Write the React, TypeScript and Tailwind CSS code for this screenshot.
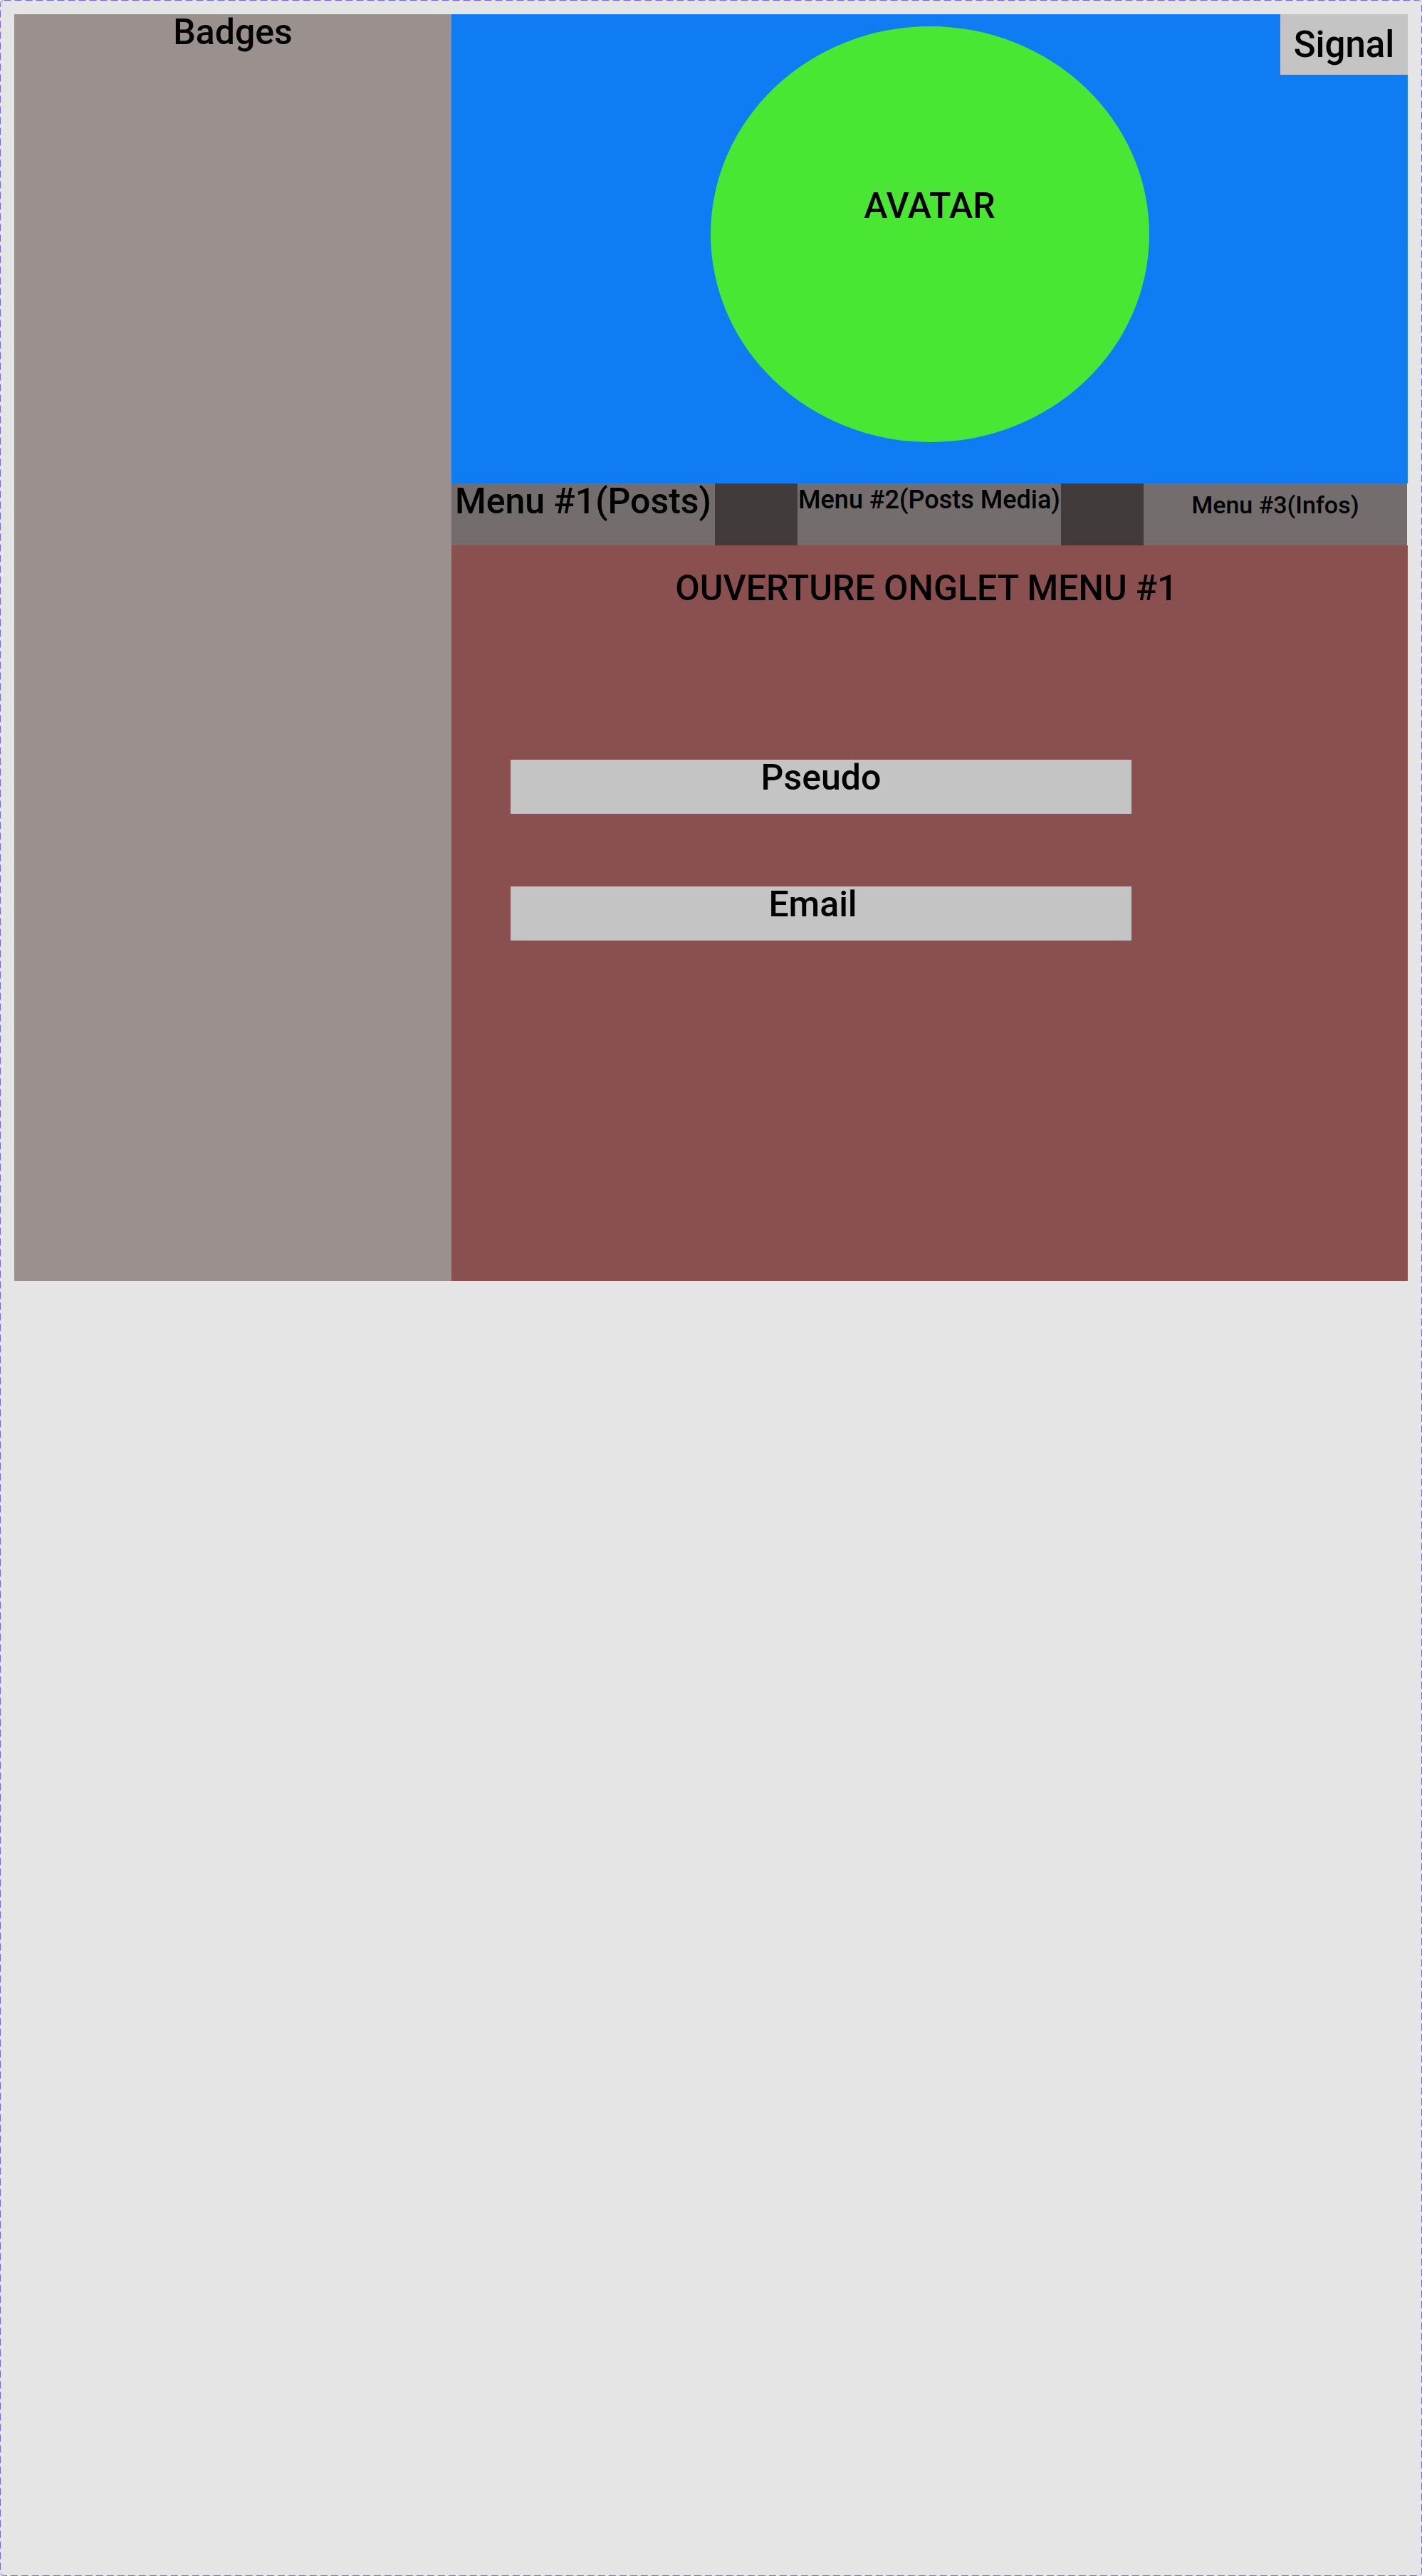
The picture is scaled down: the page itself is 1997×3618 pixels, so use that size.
import React from 'react';

// maquette profil : badges à gauche, avatar + menus + onglet ouvert à droite

const MENUS = [
  { label: 'Menu #1(Posts)', size: 'text-[50px] pt-0' },
  { label: 'Menu #2(Posts Media)', size: 'text-[36px] pt-[5px]' },
  { label: 'Menu #3(Infos)', size: 'text-[34px] pt-[13px]' },
];

function FieldBox({ label, className = '' }: { label: string; className?: string }) {
  return (
    <div className={`ml-[83px] flex h-[76px] w-[872px] justify-center bg-[#c4c4c4] ${className}`}>
      <span className="text-[50px] leading-none">{label}</span>
    </div>
  );
}

export default function App() {
  return (
    <div className="relative h-[3618px] w-[1997px] bg-[#e5e5e5] p-[20px] font-['Roboto',sans-serif] font-medium text-black">
      {/* contour pointillé du cadre */}
      <svg className="pointer-events-none absolute inset-0" width="1997" height="3618">
        <rect
          x="0.5"
          y="0.5"
          width="1996"
          height="3617"
          rx="5"
          fill="none"
          stroke="#7b61ff"
          strokeWidth="1"
          strokeDasharray="10 5"
        />
      </svg>

      <div className="flex h-[1779px]">
        {/* colonne badges */}
        <aside className="flex w-[614px] justify-center bg-[#9a908e]">
          <span className="text-[50px] leading-none">Badges</span>
        </aside>

        <main className="flex flex-1 flex-col">
          {/* en-tête avatar */}
          <header className="relative flex h-[659px] justify-center bg-[#107cf4]">
            <div className="mt-[17px] flex h-[584px] w-[616px] justify-center rounded-[50%] bg-[#4ae634] pt-[227px]">
              <span className="text-[50px] leading-none">AVATAR</span>
            </div>
            <div className="absolute right-0 top-0 flex h-[85px] w-[179px] items-center justify-center bg-[#c4c4c4]">
              <span className="text-[51px] leading-none">Signal</span>
            </div>
          </header>

          {/* barre des menus */}
          <nav className="flex h-[87px]">
            {MENUS.map((m, i) => (
              <React.Fragment key={m.label}>
                {i > 0 && <div className="w-[116px] bg-[#413b3b]" />}
                <div className={`flex w-[370px] justify-center whitespace-nowrap bg-[#736e6d] ${m.size}`}>
                  <span className="leading-none">{m.label}</span>
                </div>
              </React.Fragment>
            ))}
          </nav>

          {/* contenu onglet */}
          <section className="flex flex-1 flex-col bg-[#8a504f] pt-[35px]">
            <h2 className="pr-[9px] text-center text-[50px] font-medium leading-none">
              OUVERTURE ONGLET MENU #1
            </h2>
            <FieldBox label="Pseudo" className="mt-[216px]" />
            <FieldBox label="Email" className="mt-[102px] pr-[23px]" />
          </section>
        </main>
      </div>
    </div>
  );
}
